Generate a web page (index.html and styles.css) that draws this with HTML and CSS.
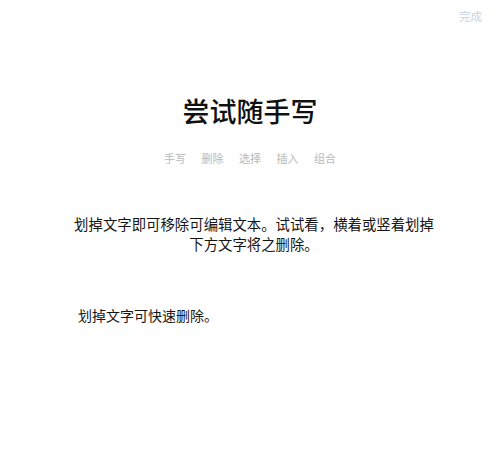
FILE: index.html
```html
<!DOCTYPE html>
<html lang="zh-CN">
<head>
    <meta charset="UTF-8">
    <meta name="viewport" content="width=device-width, initial-scale=1.0">
    <title>尝试随手写</title>
    <link rel="stylesheet" href="styles.css">
</head>
<body>
    <div class="page">
        <div class="topbar">
            <span class="done">完成</span>
        </div>

        <h1 class="title">尝试随手写</h1>

        <div class="tools">
            <span>手写</span>
            <span>删除</span>
            <span>选择</span>
            <span>插入</span>
            <span>组合</span>
        </div>

        <p class="intro">划掉文字即可移除可编辑文本。试试看，横着或竖着划掉<br>下方文字将之删除。</p>

        <p class="note">划掉文字可快速删除。</p>
    </div>
</body>
</html>
```

FILE: styles.css
```css
body {
    margin: 0;
    background-color: #fff;
    font-family: "Noto Sans CJK SC", "Noto Sans", sans-serif;
    color: #151515;
}
.page {
    width: 500px;
    height: 475px;
    overflow: hidden;
}
.topbar {
    height: 32px;
    display: flex;
    justify-content: flex-end;
    align-items: center;
    padding-right: 18px;
}
.done {
    font-size: 11.5px;
    color: #c3d3e8;
}
.title {
    margin: 63px 0 0;
    font-size: 27px;
    font-weight: 500;
    line-height: 32px;
    text-align: center;
    color: #111;
}
.tools {
    margin-top: 23px;
    display: flex;
    justify-content: center;
    gap: 15.5px;
    font-size: 11px;
    line-height: 16px;
    color: #b9b9b9;
}
.intro {
    margin: 48px 0 0;
    padding-left: 8px;
    font-size: 14.4px;
    line-height: 20px;
    text-align: center;
    white-space: nowrap;
}
.note {
    margin: 51px 0 0;
    padding-left: 78px;
    font-size: 14px;
    line-height: 20px;
}
```
